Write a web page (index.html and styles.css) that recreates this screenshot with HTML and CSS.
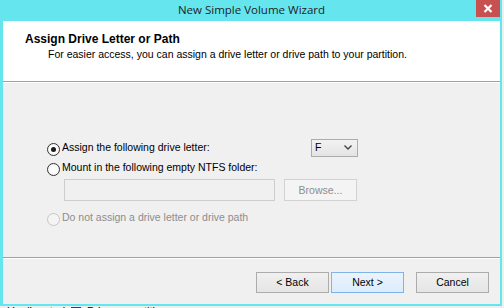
FILE: index.html
```html
<!DOCTYPE html>
<html>

<head>
  <title>New Simple Volume Wizard</title>
  <link rel="stylesheet" href="styles.css">
</head>

<body>
  <div class="window">
    <div class="titlebar">
      <span class="title">New Simple Volume Wizard</span>
      <span class="close">
        <svg width="10" height="9" viewBox="0 0 10 9">
          <path d="M1.5 1 L8.5 8 M8.5 1 L1.5 8" stroke="#fff" stroke-width="2.2" fill="none" />
        </svg>
      </span>
    </div>

    <div class="client">
      <header class="head">
        <h1>Assign Drive Letter or Path</h1>
        <p>For easier access, you can assign a drive letter or drive path to your partition.</p>
      </header>

      <section class="options">
        <div class="opt first">
          <label class="choice"><span class="radio checked"></span>Assign the following drive letter:</label>
          <div class="combo">
            <span>F</span>
            <svg width="8" height="5" viewBox="0 0 8 5">
              <path d="M0.5 0.5 L4 4 L7.5 0.5" stroke="#444" stroke-width="1.4" fill="none" />
            </svg>
          </div>
        </div>

        <div class="opt">
          <label class="choice"><span class="radio"></span>Mount in the following empty NTFS folder:</label>
        </div>

        <div class="folder">
          <div class="field"></div>
          <div class="btn disabled">Browse...</div>
        </div>

        <div class="opt">
          <label class="choice off"><span class="radio"></span>Do not assign a drive letter or drive path</label>
        </div>
      </section>

      <footer class="buttons">
        <div class="btn">&lt; Back</div>
        <div class="btn default">Next &gt;</div>
        <div class="btn cancel">Cancel</div>
      </footer>
    </div>
  </div>

  <div class="behind">
    <span>Unallocated</span>
    <span class="swatch"></span>
    <span>Primary partition</span>
  </div>
</body>

</html>
```

FILE: styles.css
```css
* {
  box-sizing: border-box;
}

html,
body {
  margin: 0;
  height: 100%;
  overflow: hidden;
}

body {
  background-color: #eef0ef;
  color: #000;
  font: 10.5px/13px "Liberation Sans", Arial, sans-serif;
  width: 504px;
}

.window {
  background-color: #65e5ee;
  display: flex;
  flex-direction: column;
  height: 306px;
  padding: 0 2px 2px 3px;
  width: 502px;
}

.titlebar {
  display: flex;
  height: 21px;
  justify-content: center;
  position: relative;
}

.title {
  color: #1e1e1e;
  font: 11.5px/21px "Open Sans", sans-serif;
  margin-top: -1px;
}

.close {
  align-items: center;
  background-color: #c75050;
  display: flex;
  height: 17px;
  justify-content: center;
  position: absolute;
  right: 0;
  top: 0;
  width: 24px;
}

.client {
  background-color: #f0f0f0;
  display: flex;
  flex: 1;
  flex-direction: column;
}

.head {
  background-color: #fff;
  border-bottom: 1px solid #a0a0a0;
  box-shadow: 0 1px 0 #fff;
  height: 61px;
  padding: 11px 0 0 22px;
}

h1 {
  font: bold 12px/14px "Liberation Sans", Arial, sans-serif;
  margin: 0;
}

.head p {
  margin: 2px 0 0 23px;
}

.options {
  display: flex;
  flex: 1;
  flex-direction: column;
  margin-top: 1px;
  padding: 58px 0 0 44px;
}

.opt {
  align-items: center;
  display: flex;
  height: 13px;
}

.opt + .opt {
  margin-top: 7px;
}

.first {
  justify-content: space-between;
  width: 311px;
}

.choice {
  align-items: center;
  display: flex;
  gap: 2px;
}

.choice.off {
  color: #8d8d8d;
}

.radio {
  background: radial-gradient(circle, #fff 30%, #ececec 100%);
  border: 1px solid #333;
  border-radius: 50%;
  height: 13px;
  margin-top: 4px;
  position: relative;
  width: 13px;
}

.radio.checked::after {
  background-color: #1b1b1b;
  border-radius: 50%;
  content: "";
  height: 5px;
  left: 3px;
  position: absolute;
  top: 3px;
  width: 5px;
}

.off .radio {
  background: #f4f4f4;
  border-color: #c6c6c6;
}

.combo {
  align-items: center;
  background: linear-gradient(#f2f2f2, #e4e4e4);
  border: 1px solid #acacac;
  display: flex;
  height: 18px;
  justify-content: space-between;
  padding: 0 5px 0 3px;
  width: 47px;
}

.folder {
  display: flex;
  gap: 9px;
  margin: 5px 0 10px 17px;
}

.field {
  background-color: #f0f0f0;
  border: 1px solid #cdcdcd;
  height: 22px;
  width: 211px;
}

.btn {
  align-items: center;
  background: linear-gradient(#f0f0f0, #e5e5e5);
  border: 1px solid #acacac;
  display: flex;
  height: 21px;
  justify-content: center;
  width: 73px;
}

.btn.disabled {
  background: #f4f4f4;
  border-color: #d2d2d2;
  color: #8d8d8d;
  height: 22px;
}

.btn.default {
  background: linear-gradient(#ecf4fc, #dcecfc);
  border-color: #7eb4ea;
}

.buttons {
  border-top: 1px solid #a0a0a0;
  box-shadow: inset 0 1px 0 #fff;
  display: flex;
  gap: 2px;
  height: 47px;
  justify-content: flex-end;
  padding: 14px 11px 0 0;
}

.btn.cancel {
  margin-left: 10px;
}

.behind {
  align-items: center;
  display: flex;
  font: 11px/11px "Liberation Sans", Arial, sans-serif;
  gap: 6px;
  height: 2px;
  overflow: hidden;
  padding-left: 7px;
}

.behind span {
  margin-top: 9px;
}

.swatch {
  background-color: #1a3ea8;
  display: block;
  height: 10px;
  width: 10px;
}
```
